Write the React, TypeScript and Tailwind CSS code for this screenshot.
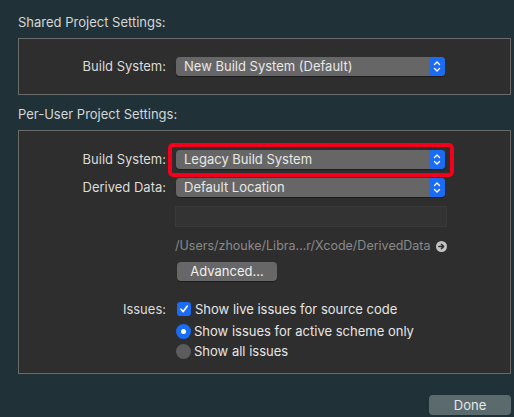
import React from 'react';

const font = { fontFamily: 'Inter, "Liberation Sans", sans-serif' };

function Stepper() {
  return (
    <div className="flex h-full w-[16px] items-center justify-center rounded-r-[4px] bg-[#1b6cf2]">
      <svg width="8" height="13" viewBox="0 0 8 13" fill="none" stroke="white" strokeWidth="1.4" strokeLinecap="round" strokeLinejoin="round">
        <path d="M1.5 4.5 L4 2 L6.5 4.5" />
        <path d="M1.5 8.5 L4 11 L6.5 8.5" />
      </svg>
    </div>
  );
}

function Popup({ value }: { value: string }) {
  return (
    <div className="flex h-[19px] w-[269px] items-center justify-between rounded-[4px] bg-[#666666] shadow-[0_1px_1px_rgba(0,0,0,0.4)]">
      <span className="pl-[8px] text-[13px] leading-none text-[#e8e8e8]">{value}</span>
      <Stepper />
    </div>
  );
}

function Label({ children }: { children: React.ReactNode }) {
  return <div className="w-[147px] shrink-0 text-right text-[13px] leading-none text-[#dcdcdc]">{children}</div>;
}

export default function App() {
  return (
    <div style={font} className="flex h-[417px] w-[514px] flex-col overflow-hidden bg-[#203238] pl-[18px] pr-[3px]">
      <div className="mt-[15px] text-[13px] leading-[14px] text-[#d6d6d6]">Shared Project Settings:</div>
      <div className="mt-[9px] flex h-[57px] items-center border border-[#6a6a6a] bg-[#2e2e2e]">
        <Label>Build System:</Label>
        <div className="ml-[10px]">
          <Popup value="New Build System (Default)" />
        </div>
      </div>

      <div className="mt-[12px] text-[13px] leading-[14px] text-[#d6d6d6]">Per-User Project Settings:</div>
      <div className="mt-[9px] flex h-[244px] flex-col border border-[#6a6a6a] bg-[#2e2e2e] pt-[19px]">
        <div className="flex items-center">
          <Label>Build System:</Label>
          <div className="relative ml-[10px]">
            <Popup value="Legacy Build System" />
            <div className="absolute -top-[7px] -bottom-[8px] -left-[8px] -right-[9px] rounded-[5px] border-[4px] border-[#f2001c]" />
          </div>
        </div>
        <div className="mt-[9px] flex items-center">
          <Label>Derived Data:</Label>
          <div className="ml-[10px]">
            <Popup value="Default Location" />
          </div>
        </div>
        <div className="ml-[156px] mt-[9px] h-[21px] w-[272px] border border-[#3a3a3a] bg-[#333333]" />
        <div className="ml-[156px] mt-[11px] flex h-[16px] w-[272px] items-center justify-between">
          <span className="whitespace-nowrap text-[12.5px] leading-none text-[#8a8a8a]">/Users/zhouke/Libra...r/Xcode/DerivedData</span>
          <svg className="shrink-0" width="11" height="11" viewBox="0 0 11 11">
            <circle cx="5.5" cy="5.5" r="5.5" fill="#c4c4c4" />
            <path d="M2.8 5.5 H7.6 M5.4 3.2 L7.7 5.5 L5.4 7.8" stroke="#2e2e2e" strokeWidth="1.5" fill="none" strokeLinecap="round" strokeLinejoin="round" />
          </svg>
        </div>
        <div className="ml-[158px] mt-[8px] flex h-[19px] w-[100px] items-center justify-center rounded-[4px] bg-[#676767] text-[13px] leading-none text-[#f0f0f0] shadow-[0_1px_1px_rgba(0,0,0,0.4)]">
          Advanced...
        </div>

        <div className="mt-[21px] flex items-center">
          <Label>Issues:</Label>
          <div className="ml-[11px] flex items-center">
            <div className="flex h-[14px] w-[14px] items-center justify-center rounded-[3px] bg-[#1b6cf2]">
              <svg width="10" height="10" viewBox="0 0 10 10" fill="none" stroke="white" strokeWidth="1.6" strokeLinecap="round" strokeLinejoin="round">
                <path d="M2 5.2 L4.2 7.6 L8.2 2.2" />
              </svg>
            </div>
            <span className="ml-[4px] text-[13px] leading-none text-[#e6e6e6]">Show live issues for source code</span>
          </div>
        </div>
        <div className="ml-[157px] mt-[8px] flex items-center">
          <div className="flex h-[15px] w-[15px] items-center justify-center rounded-full bg-[#1b6cf2]">
            <div className="h-[5px] w-[5px] rounded-full bg-white" />
          </div>
          <span className="ml-[3px] text-[13px] leading-none text-[#e6e6e6]">Show issues for active scheme only</span>
        </div>
        <div className="ml-[157px] mt-[5px] flex items-center">
          <div className="h-[15px] w-[15px] rounded-full bg-[#5c5c5c]" />
          <span className="ml-[3px] text-[13px] leading-none text-[#e6e6e6]">Show all issues</span>
        </div>
      </div>

      <div className="mt-[21px] flex justify-end">
        <div className="flex h-[20px] w-[82px] items-center justify-center rounded-[4px] bg-[#5b6a6d] text-[13px] leading-none text-[#e8e8e8]">
          Done
        </div>
      </div>
    </div>
  );
}
